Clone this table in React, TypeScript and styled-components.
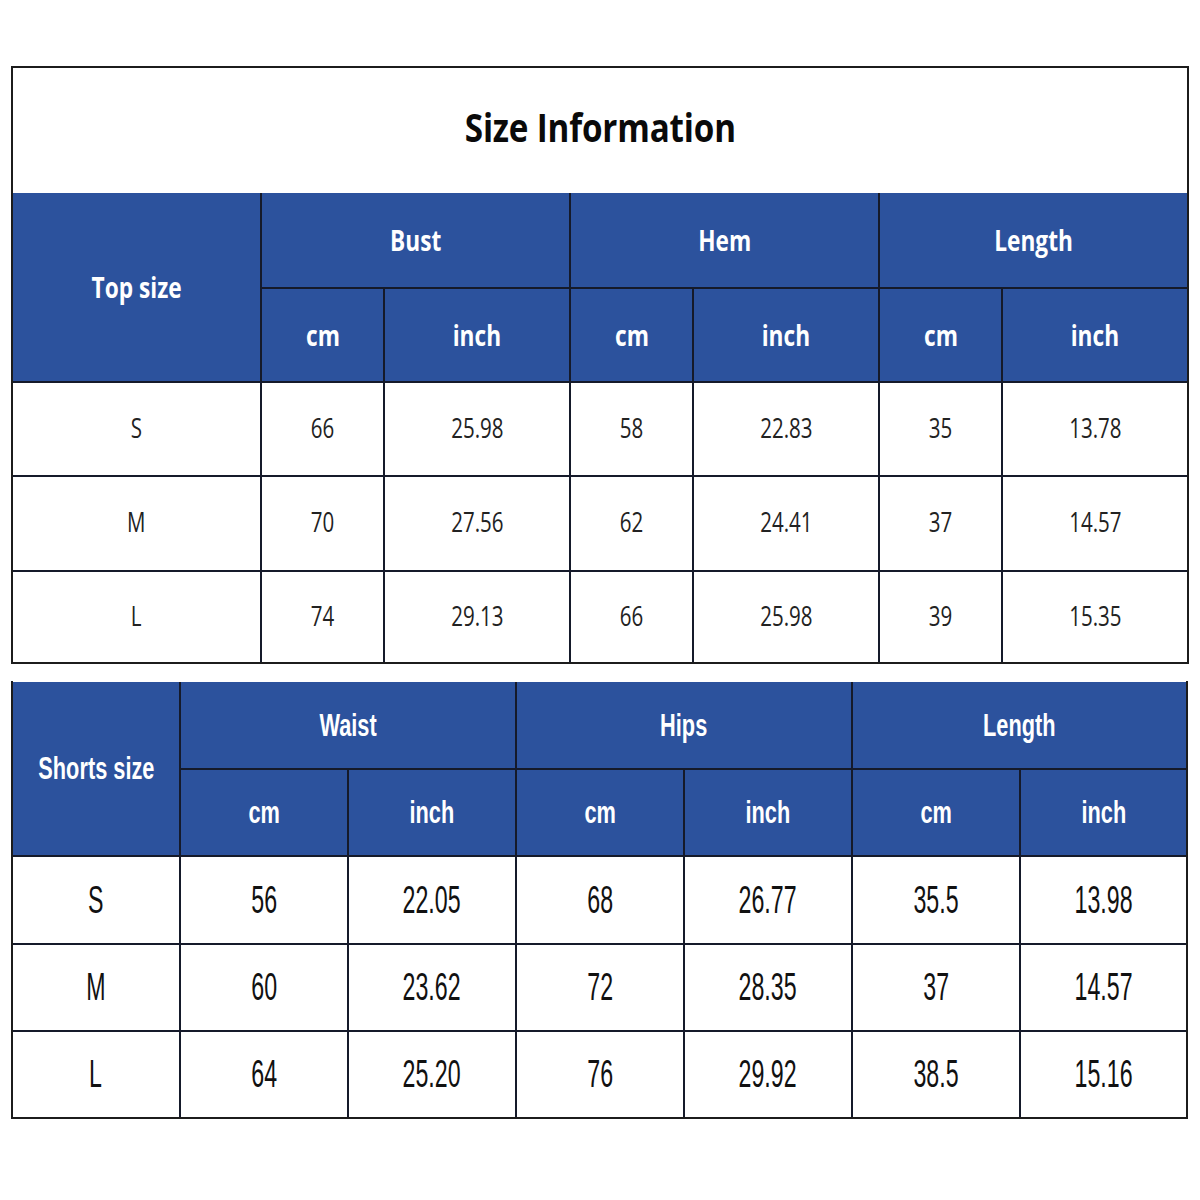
import React from "react";
import styled, { createGlobalStyle } from "styled-components";

const Global = createGlobalStyle`
  html, body { margin: 0; padding: 0; background: #ffffff; }
  body { font-family: "Open Sans", "Noto Sans", sans-serif; }
`;

const BLUE = "#2c529d";
const LINE = "#151a2a";

const Page = styled.div`
  width: 1200px;
  height: 1200px;
  box-sizing: border-box;
  padding: 66px 0 0 11px;
  display: flex;
  flex-direction: column;
  gap: 17px;
`;

const TopWrap = styled.section`
  width: 1178px;
  box-sizing: border-box;
  border: 2px solid #1c1c1c;
  display: flex;
  flex-direction: column;
`;

const Title = styled.div`
  height: 125px;
  box-sizing: border-box;
  padding-bottom: 8px;
  display: flex;
  align-items: center;
  justify-content: center;
  background: #fff;
`;

const TitleText = styled.span`
  display: inline-block;
  font-family: "Open Sans", "Noto Sans", sans-serif;
  font-weight: 700;
  font-size: 40px;
  color: #0a0a0a;
  transform: scaleX(0.83);
  letter-spacing: -0.2px;
`;

const Grid = styled.div<{ $cols: string; $rows: string }>`
  display: grid;
  grid-template-columns: ${(p) => p.$cols};
  grid-template-rows: ${(p) => p.$rows};
  gap: 2px;
  background: ${LINE};
`;

const Cell = styled.div<{ $head?: boolean; $col?: string; $row?: string; $lift?: number }>`
  display: flex;
  align-items: center;
  justify-content: center;
  box-sizing: border-box;
  padding-bottom: ${(p) => p.$lift || 0}px;
  background: ${(p) => (p.$head ? BLUE : "#ffffff")};
  color: ${(p) => (p.$head ? "#ffffff" : "#1e1e1e")};
  grid-column: ${(p) => p.$col || "auto"};
  grid-row: ${(p) => p.$row || "auto"};
  overflow: hidden;
  white-space: nowrap;
`;

const TopHeadText = styled.span`
  display: inline-block;
  font-family: "Open Sans", "Noto Sans", sans-serif;
  font-weight: 700;
  font-size: 28px;
  transform: scaleX(0.81);
`;

const TopBodyText = styled.span`
  display: inline-block;
  font-family: "Open Sans", "Noto Sans", sans-serif;
  font-weight: 400;
  font-size: 27px;
  color: #222;
  transform: scaleX(0.76);
`;

const BottomWrap = styled.section`
  width: 1177px;
  box-sizing: border-box;
  border: 2px solid #1c1c1c;
  border-top: none;
  padding-top: 1px;
  background: #fff;
`;

const BottomHeadText = styled.span`
  display: inline-block;
  font-family: "Liberation Sans", Arial, sans-serif;
  font-weight: 700;
  font-size: 32px;
  transform: scaleX(0.68);
`;

const BottomBodyText = styled.span`
  display: inline-block;
  font-family: "Liberation Sans", Arial, sans-serif;
  font-weight: 400;
  font-size: 38px;
  color: #111;
  transform: scaleX(0.61);
`;

const topRows = [
  ["S", "66", "25.98", "58", "22.83", "35", "13.78"],
  ["M", "70", "27.56", "62", "24.41", "37", "14.57"],
  ["L", "74", "29.13", "66", "25.98", "39", "15.35"],
];

const bottomRows = [
  ["S", "56", "22.05", "68", "26.77", "35.5", "13.98"],
  ["M", "60", "23.62", "72", "28.35", "37", "14.57"],
  ["L", "64", "25.20", "76", "29.92", "38.5", "15.16"],
];

const topGroups = ["Bust", "Hem", "Length"];
const bottomGroups = ["Waist", "Hips", "Length"];

export default function App() {
  return (
    <>
      <Global />
      <Page>
        <TopWrap>
          <Title>
            <TitleText>Size Information</TitleText>
          </Title>
          <Grid
            $cols="247px 121px 184px 121px 184px 121px 184px"
            $rows="94px 92px 92px 93px 90px"
          >
            <Cell $head $row="1 / span 2">
              <TopHeadText>Top size</TopHeadText>
            </Cell>
            {topGroups.map((g) => (
              <Cell $head $col="span 2" key={g}>
                <TopHeadText>{g}</TopHeadText>
              </Cell>
            ))}
            {topGroups.flatMap((g) => [
              <Cell $head key={g + "cm"}>
                <TopHeadText>cm</TopHeadText>
              </Cell>,
              <Cell $head key={g + "in"}>
                <TopHeadText>inch</TopHeadText>
              </Cell>,
            ])}
            {topRows.flatMap((r, i) =>
              r.map((v, j) => (
                <Cell key={`t${i}-${j}`} $lift={4}>
                  <TopBodyText>{v}</TopBodyText>
                </Cell>
              ))
            )}
          </Grid>
        </TopWrap>

        <BottomWrap>
          <Grid
            $cols="166px 166px 166px 166px 166px 166px 165px"
            $rows="86px 85px 86px 85px 85px"
          >
            <Cell $head $row="1 / span 2">
              <BottomHeadText>Shorts size</BottomHeadText>
            </Cell>
            {bottomGroups.map((g) => (
              <Cell $head $col="span 2" key={g}>
                <BottomHeadText>{g}</BottomHeadText>
              </Cell>
            ))}
            {bottomGroups.flatMap((g) => [
              <Cell $head key={g + "cm"}>
                <BottomHeadText>cm</BottomHeadText>
              </Cell>,
              <Cell $head key={g + "in"}>
                <BottomHeadText>inch</BottomHeadText>
              </Cell>,
            ])}
            {bottomRows.flatMap((r, i) =>
              r.map((v, j) => (
                <Cell key={`b${i}-${j}`}>
                  <BottomBodyText>{v}</BottomBodyText>
                </Cell>
              ))
            )}
          </Grid>
        </BottomWrap>
      </Page>
    </>
  );
}
